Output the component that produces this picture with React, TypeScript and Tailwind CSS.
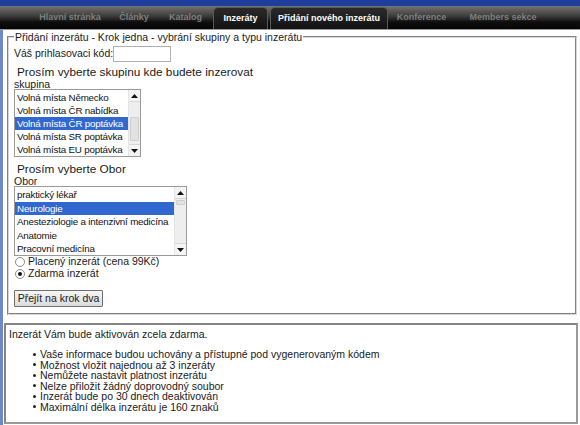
import React from "react";

const navItems = [
  { label: "Hlavní stránka", w: "w-[80px]" },
  { label: "Články", w: "w-[48px]" },
  { label: "Katalog", w: "w-[55px]" },
];

const navRight = [
  { label: "Konference", w: "w-[67px]" },
  { label: "Members sekce", w: "w-[96px]" },
];

const Arrow = ({ down }: { down?: boolean }) => (
  <svg width="7" height="4" viewBox="0 0 7 4">
    {down ? <polygon points="0,0 7,0 3.5,4" fill="#111" /> : <polygon points="0,4 7,4 3.5,0" fill="#111" />}
  </svg>
);

const ListBox = ({
  items,
  selected,
  width,
  height,
  rowH,
  thumb,
}: {
  items: string[];
  selected: number;
  width: string;
  height: string;
  rowH: string;
  thumb: { top: string; h: string };
}) => {
  return (
    <div className={`flex border border-[#9a9a9a] bg-white ${width} ${height}`}>
      <div className="flex-1 overflow-hidden pt-[1px] text-[9.8px] tracking-[-0.2px]">
        {items.map((it, i) => (
          <div
            key={it}
            className={`${rowH} pl-[2px] whitespace-nowrap ${
              i === selected ? "bg-[#3168d0] text-white" : "text-[#111]"
            }`}
          >
            {it}
          </div>
        ))}
      </div>
      <div className="w-[12px] bg-[#eeeeee] border-l border-[#e4e4e4] flex flex-col relative">
        <div className="h-[12px] flex items-center justify-center bg-[#f4f4f4] border-b border-[#d8d8d8]">
          <Arrow />
        </div>
        <div className="flex-1" />
        <div className="h-[12px] flex items-center justify-center bg-[#f4f4f4] border-t border-[#d8d8d8]">
          <Arrow down />
        </div>
        <div className={`absolute left-[1px] right-[1px] bg-[#e2e2e2] border border-[#cfcfcf] rounded-[1px] ${thumb.top} ${thumb.h}`} />
      </div>
    </div>
  );
};

const Radio = ({ checked, label }: { checked?: boolean; label: string }) => (
  <div className="flex items-center h-[12px] gap-[3px]">
    <span className="w-[10px] h-[10px] rounded-full border border-[#8a8a8a] bg-white flex items-center justify-center ml-[1px]">
      {checked && <span className="w-[4px] h-[4px] rounded-full bg-[#111]" />}
    </span>
    <span>{label}</span>
  </div>
);

export default function App() {
  return (
    <div className="w-[580px] h-[425px] overflow-hidden bg-white font-['Liberation_Sans',Arial,sans-serif] text-[10.5px] text-[#1a1a1a]">
      <div className="h-[6px] bg-[#1f3e9c]" />
      <div className="h-[24px] flex items-end pl-[30px] bg-[linear-gradient(#747474,#3a3a3a_45%,#0e0e0e_70%,#050505)] border-b border-[#9a9a9a]">
        {navItems.map((n) => (
          <div key={n.label} className={`${n.w} h-full flex items-center justify-center text-[9px] font-bold text-[#7e7e7e]`}>
            {n.label}
          </div>
        ))}
        <div className="w-[55px] h-[22px] rounded-t-[5px] border border-b-0 border-[#5a5a5a] bg-[linear-gradient(#2a2a2a,#121212)] flex items-center justify-center text-[9px] font-bold text-white">
          Inzeráty
        </div>
        <div className="w-[118px] h-[22px] ml-[2px] rounded-t-[5px] border border-b-0 border-[#5a5a5a] bg-[linear-gradient(#2a2a2a,#121212)] flex items-center justify-center text-[9px] font-bold text-white">
          Přidání nového inzerátu
        </div>
        {navRight.map((n) => (
          <div key={n.label} className={`${n.w} h-full flex items-center justify-center text-[9px] font-bold text-[#7e7e7e]`}>
            {n.label}
          </div>
        ))}
      </div>

      <div className="h-[395px] border-l-[3px] border-[#6f88c8] pr-[2px]">
        <fieldset className="ml-[4px] mr-[1px] border-2 [border-style:groove] border-[#d6d6d6] pl-[5px] pb-[6px]">
          <legend className="px-[1px] leading-[14px]">Přidání inzerátu - Krok jedna - vybrání skupiny a typu inzerátu</legend>
          <div className="flex items-center h-[16px] mt-[2px]">
            <span>Váš prihlasovaci kód:</span>
            <span className="w-[58px] h-[16px] border border-[#b0b0b0] bg-white" />
          </div>
          <div className="mt-[2px] h-[16px] leading-[16px] text-[11.8px] pl-[3px]">
            Prosím vyberte skupinu kde budete inzerovat
          </div>
          <div className="h-[9px] leading-[9px]">skupina</div>
          <ListBox
            items={[
              "Volná místa Německo",
              "Volná místa ČR nabídka",
              "Volná místa ČR poptávka",
              "Volná místa SR poptávka",
              "Volná místa EU poptávka",
            ]}
            selected={2}
            width="w-[127px]"
            height="h-[68px]"
            rowH="h-[13px] leading-[13px]"
            thumb={{ top: "top-[27px]", h: "h-[24px]" }}
          />
          <div className="mt-[4px] h-[16px] leading-[16px] text-[11.8px] pl-[3px]">Prosím vyberte Obor</div>
          <div className="h-[9px] leading-[9px]">Obor</div>
          <ListBox
            items={[
              "praktický lékař",
              "Neurologie",
              "Anesteziologie a intenzivní medicína",
              "Anatomie",
              "Pracovní medicína",
            ]}
            selected={1}
            width="w-[173px]"
            height="h-[70px]"
            rowH="h-[13.5px] leading-[13.5px]"
            thumb={{ top: "top-[13px]", h: "h-[5px]" }}
          />
          <Radio label="Placený inzerát (cena 99Kč)" />
          <Radio checked label="Zdarma inzerát" />
          <button className="mt-[10px] w-[89px] h-[17px] border border-[#6e6e6e] bg-[linear-gradient(#f6f6f6,#dcdcdc)] text-[10.5px] leading-[15px] rounded-[1px]">
            Přejít na krok dva
          </button>
        </fieldset>

        <div className="mt-[8px] ml-[1px] h-[101px] border-2 border-[#9a9a9a] border-t-[#858585] border-l-[#858585] pl-[3px] pt-[3px]">
          <div className="h-[12px] leading-[12px]">Inzerát Vám bude aktivován zcela zdarma.</div>
          <ul className="mt-[9px] pl-[24px]">
            {[
              "Vaše informace budou uchovány a přístupné pod vygenerovaným kódem",
              "Možnost vložit najednou až 3 inzeráty",
              "Nemůžete nastavit platnost inzerátu",
              "Nelze přiložit žádný doprovodný soubor",
              "Inzerát bude po 30 dnech deaktivován",
              "Maximální délka inzerátu je 160 znaků",
            ].map((t) => (
              <li key={t} className="flex items-center h-[10.5px] leading-[10.5px]">
                <span className="w-[3px] h-[3px] bg-[#222] rounded-full mr-[4px]" />
                <span>{t}</span>
              </li>
            ))}
          </ul>
        </div>
      </div>
    </div>
  );
}
